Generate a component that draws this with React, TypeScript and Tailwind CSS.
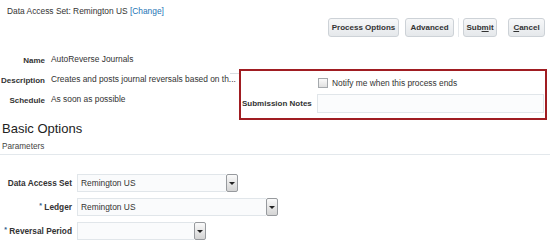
function Btn({ children, className }: { children: React.ReactNode; className: string }) {
  return (
    <button
      className={`block h-[19px] rounded-[3px] border border-[#cdd2d7] bg-gradient-to-b from-[#f7f8f9] to-[#e5e8eb] text-[8px] font-bold text-[#333] leading-none ${className}`}
    >
      {children}
    </button>
  )
}

function Select({ value, width }: { value: string; width: string }) {
  return (
    <div className={`flex h-[18px] ${width}`}>
      <div className="flex-1 flex items-center border border-r-0 border-[#e1e6ea] bg-[#fafbfc] pl-[3px] text-[8.4px] font-normal text-[#333]">
        {value}
      </div>
      <div className="flex items-center justify-center w-[12px] h-full border border-[#979a9e] rounded-[2px] bg-gradient-to-b from-[#fafafa] to-[#d4d4d4]">
        <span className="block w-0 h-0 border-l-[3px] border-r-[3px] border-t-[3px] border-l-transparent border-r-transparent border-t-[#222]" />
      </div>
    </div>
  )
}

export default function App() {
  return (
    <div className="w-[550px] h-[250px] bg-white overflow-hidden font-['Liberation_Sans',Arial,sans-serif] text-[#333]">
      <div className="flex items-start justify-between pl-[7px] pr-[5px]">
        <div className="pt-[5px] text-[8.4px] leading-[12px]">
          Data Access Set: Remington US <span className="text-[#2474b5]">[Change]</span>
        </div>
        <div className="flex items-center mt-[18px]">
          <Btn className="w-[71px]">Process Options</Btn>
          <Btn className="w-[49px] ml-[6px]">Advanced</Btn>
          <div className="ml-[4px] w-px h-[19px] bg-[#e6e9ec]" />
          <Btn className="w-[34px] ml-[4px]">
            Sub<span className="underline">m</span>it
          </Btn>
          <Btn className="w-[37px] ml-[11px]">
            <span className="underline">C</span>ancel
          </Btn>
        </div>
      </div>

      <div className="flex items-start">
        <div className="w-[230px] mt-[16px] grid grid-cols-[45px_1fr] gap-x-[6px] auto-rows-[20px] text-[8.4px] leading-[12px]">
          <span className="text-right font-bold text-[8px] mt-[2px]">Name</span>
          <span>AutoReverse Journals</span>
          <span className="text-right font-bold text-[8px] mt-[2px] -ml-[4px]">Description</span>
          <span className="whitespace-nowrap">Creates and posts journal reversals based on th...</span>
          <span className="text-right font-bold text-[8px] mt-[2px]">Schedule</span>
          <span>As soon as possible</span>
        </div>
        <div className="w-[9px] mt-[36px] h-px bg-[#d9dee2]" />
        <div className="mt-[32px] w-[308px] h-[51px] border-2 border-[#a01d22] flex flex-col pt-[7px]">
          <div className="flex items-center pl-[77px] gap-[4px] text-[8.4px] leading-[10px]">
            <span className="w-[10px] h-[10px] border border-[#a5a9ad] bg-gradient-to-b from-[#fbfbfb] to-[#e0e0e0]" />
            <span>Notify me when this process ends</span>
          </div>
          <div className="flex items-center mt-[6px] pl-[1px]">
            <span className="w-[75px] text-[8px] font-bold whitespace-nowrap">Submission Notes</span>
            <div className="flex-1 mr-[1px] h-[19px] border border-[#e1e6ea] bg-[#fbfcfd]" />
          </div>
        </div>
      </div>

      <div className="pl-[2px] mt-[1px] text-[13px] leading-[16px] text-[#222]">Basic Options</div>
      <div className="pl-[2px] mt-[4px] text-[8.2px] leading-[12px] text-[#444]">Parameters</div>
      <div className="mt-[1px] h-px bg-[#e3e8ec]" />

      <div className="grid grid-cols-[72px_auto] gap-x-[5px] gap-y-[6px] items-center mt-[19px] text-[8.3px] font-bold">
        <span className="text-right whitespace-nowrap">Data Access Set</span>
        <Select value="Remington US" width="w-[161px]" />
        <span className="text-right whitespace-nowrap">
          <span className="text-[#2f5d8c] align-top text-[7px]">*</span> Ledger
        </span>
        <Select value="Remington US" width="w-[201px]" />
        <span className="text-right whitespace-nowrap -ml-[4px]">
          <span className="text-[#2f5d8c] align-top text-[7px]">*</span> Reversal Period
        </span>
        <Select value="" width="w-[129px]" />
      </div>
    </div>
  )
}
